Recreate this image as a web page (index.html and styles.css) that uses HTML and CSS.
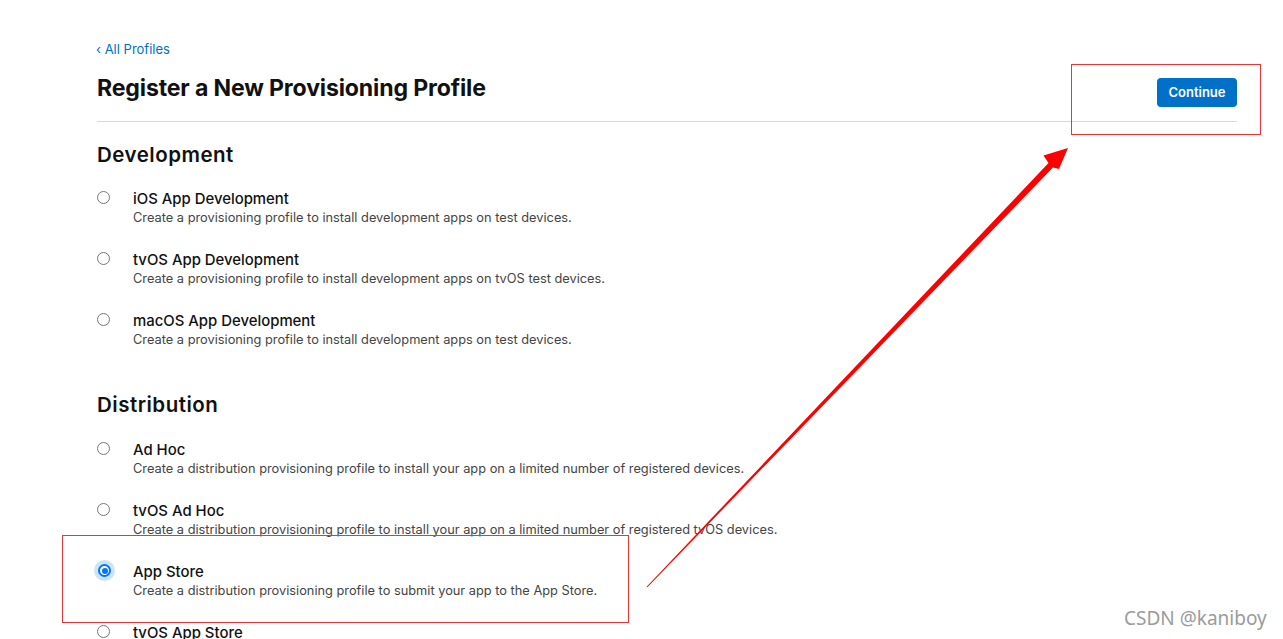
FILE: index.html
```html
<!DOCTYPE html>
<html>
<head>
<meta charset="utf-8">
<link rel="stylesheet" href="styles.css">
</head>
<body>
<div class="page">
  <a class="back" href="#">&lsaquo; All Profiles</a>
  <div class="header">
    <h1 class="title">Register a New Provisioning Profile</h1>
    <button class="btn">Continue</button>
  </div>

  <h2 class="section">Development</h2>
  <div class="list">
    <div class="item"><span class="radio"></span><div><div class="name">iOS App Development</div><div class="desc">Create a provisioning profile to install development apps on test devices.</div></div></div>
    <div class="item"><span class="radio"></span><div><div class="name">tvOS App Development</div><div class="desc">Create a provisioning profile to install development apps on tvOS test devices.</div></div></div>
    <div class="item"><span class="radio"></span><div><div class="name">macOS App Development</div><div class="desc">Create a provisioning profile to install development apps on test devices.</div></div></div>
  </div>

  <h2 class="section section2">Distribution</h2>
  <div class="list">
    <div class="item"><span class="radio"></span><div><div class="name">Ad Hoc</div><div class="desc">Create a distribution provisioning profile to install your app on a limited number of registered devices.</div></div></div>
    <div class="item"><span class="radio"></span><div><div class="name">tvOS Ad Hoc</div><div class="desc">Create a distribution provisioning profile to install your app on a limited number of registered tvOS devices.</div></div></div>
    <div class="item"><span class="radio checked"></span><div><div class="name">App Store</div><div class="desc">Create a distribution provisioning profile to submit your app to the App Store.</div></div></div>
    <div class="item"><span class="radio"></span><div><div class="name">tvOS App Store</div><div class="desc">Create a distribution provisioning profile to submit your tvOS app to the App Store.</div></div></div>
  </div>
</div>

<div class="mark mark1"></div>
<div class="mark mark2"></div>
<svg class="arrow" width="1283" height="639" viewBox="0 0 1283 639">
  <polygon fill="#ff0000" points="646.6,586.7 1048.5,163 1043.5,155.5 1068,148 1059,169 1053,167.5 647.4,587.3"/>
</svg>
<div class="watermark">CSDN @kaniboy</div>
</body>
</html>
```

FILE: styles.css
```css
html, body { margin: 0; padding: 0; background: #fff; }
body { font-family: Inter, "Noto Sans", sans-serif; color: #1d1d1f; height: 639px; overflow: hidden; }
.page { padding: 40px 0 0 97px; width: 1140px; }
.back { display: block; font-size: 13px; line-height: 18px; color: #0070c9; text-decoration: none; margin-left: -1px; }
.header { display: flex; justify-content: space-between; align-items: flex-start; margin-top: 14px; padding-bottom: 14px; border-bottom: 1px solid #d9d9d9; }
.title { margin: 0; font-size: 23.1px; line-height: 32px; font-weight: 700; color: #111; letter-spacing: -0.15px; }
.btn { margin-top: 6px; height: 29px; width: 80px; border: 0; border-radius: 4px; background: #0070c9; color: #fff; font-family: inherit; font-size: 13px; font-weight: 600; padding: 0 0 2px; }
.section { margin: 20px 0 21px; font-size: 20.5px; line-height: 26px; font-weight: 600; color: #111; letter-spacing: 0.5px; }
.section2 { margin: 43px 0 22px; }
.list { display: flex; flex-direction: column; gap: 23px; }
.item { display: flex; gap: 23px; align-items: flex-start; }
.radio { width: 13px; height: 13px; box-sizing: border-box; border: 1px solid #767676; border-radius: 50%; margin-top: 2px; flex: none; position: relative; background: #fff; }
.radio.checked { border: 2px solid #0075ff; margin-left: 1px; margin-right: -1px; box-shadow: 0 0 0 4px #cce4f7; }
.radio.checked::after { content: ""; position: absolute; left: 1.5px; top: 1.5px; width: 6px; height: 6px; border-radius: 50%; background: #0075ff; }
.name { font-size: 14.9px; line-height: 20px; font-weight: 500; color: #111; }
.desc { font-size: 12.8px; line-height: 18px; color: #444; }
.mark { position: absolute; border: 1px solid #e83535; box-sizing: border-box; }
.mark1 { left: 1071px; top: 64px; width: 190px; height: 71px; }
.mark2 { left: 62px; top: 535px; width: 567px; height: 88px; }
.arrow { position: absolute; left: 0; top: 0; }
.watermark { position: absolute; left: 1124px; top: 605px; font-family: "Noto Sans", sans-serif; font-size: 19px; line-height: 26px; color: #9b9b9b; }
```
